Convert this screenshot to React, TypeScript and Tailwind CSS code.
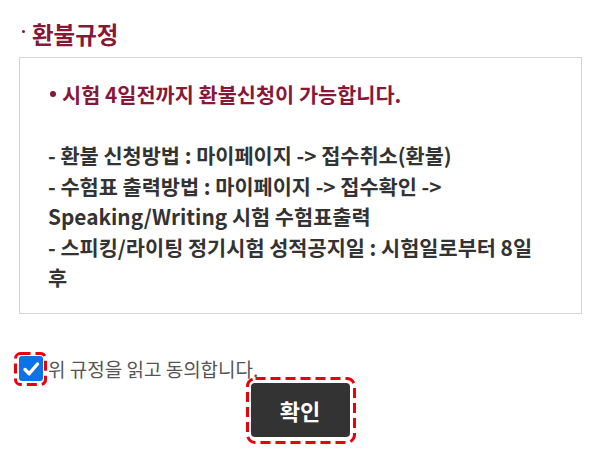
function DashedFrame({ radius }: { radius: number }) {
  return (
    <svg className="absolute inset-0 w-full h-full overflow-visible pointer-events-none" fill="none">
      <rect
        x="1.5"
        y="1.5"
        width="calc(100% - 3px)"
        height="calc(100% - 3px)"
        rx={radius}
        stroke="#e8000b"
        strokeWidth="3"
        strokeDasharray="10 5"
      />
    </svg>
  )
}

export default function App() {
  return (
    <div className="w-[600px] h-[459px] bg-white font-['Noto_Sans_CJK_KR',sans-serif]">
      <div className="pt-[20px] pl-[19px] pr-[18px]">
        <h2 className="flex items-center h-[30px] text-[23.5px] font-bold text-[#871838]">
          <span className="w-[3px] h-[3px] rounded-full bg-[#871838] ml-[3px] mr-[7px] -mt-[8px]" />
          환불규정
        </h2>

        <div className="mt-[7px] border border-[#d4d4d4] pl-[28px] pr-[28px] pt-[21px] pb-[20px] text-[20.8px] leading-[30.5px] font-bold text-[#333]">
          <p className="flex items-center text-[#871838]">
            <span className="w-[6px] h-[6px] rounded-full bg-[#871838] ml-[2px] mr-[6px]" />
            시험 4일전까지 환불신청이 가능합니다.
          </p>
          <p className="mt-[30.5px]">
            - 환불 신청방법 : 마이페이지 -&gt; 접수취소(환불)
            <br />- 수험표 출력방법 : 마이페이지 -&gt; 접수확인 -&gt; Speaking/Writing 시험 수험표출력
            <br />- 스피킹/라이팅 정기시험 성적공지일 : 시험일로부터 8일 후
          </p>
        </div>
      </div>

      <label className="mt-[41px] pl-[19px] flex items-center">
        <span className="relative flex items-center justify-center w-[24px] h-[25px] rounded-[3px] bg-[#0b72e7]">
          <svg viewBox="0 0 24 25" className="w-[24px] h-[25px]" fill="none">
            <path d="M6 13.5l4.2 4.2L18.5 8" stroke="white" strokeWidth="3.4" strokeLinecap="round" strokeLinejoin="round" />
          </svg>
          <span className="absolute -left-[5px] -top-[4px] -right-[4px] -bottom-[5px]">
            <DashedFrame radius={5} />
          </span>
        </span>
        <span className="ml-[5px] text-[19px] text-[#555]">위 규정을 읽고 동의합니다.</span>
      </label>

      <div className="flex justify-center">
        <button className="relative w-[99px] h-[54px] rounded-[4px] bg-[#333] text-white text-[22px] font-bold">
          확인
          <span className="absolute -left-[5px] -top-[6px] -right-[6px] -bottom-[7px]">
            <DashedFrame radius={8} />
          </span>
        </button>
      </div>
    </div>
  )
}
